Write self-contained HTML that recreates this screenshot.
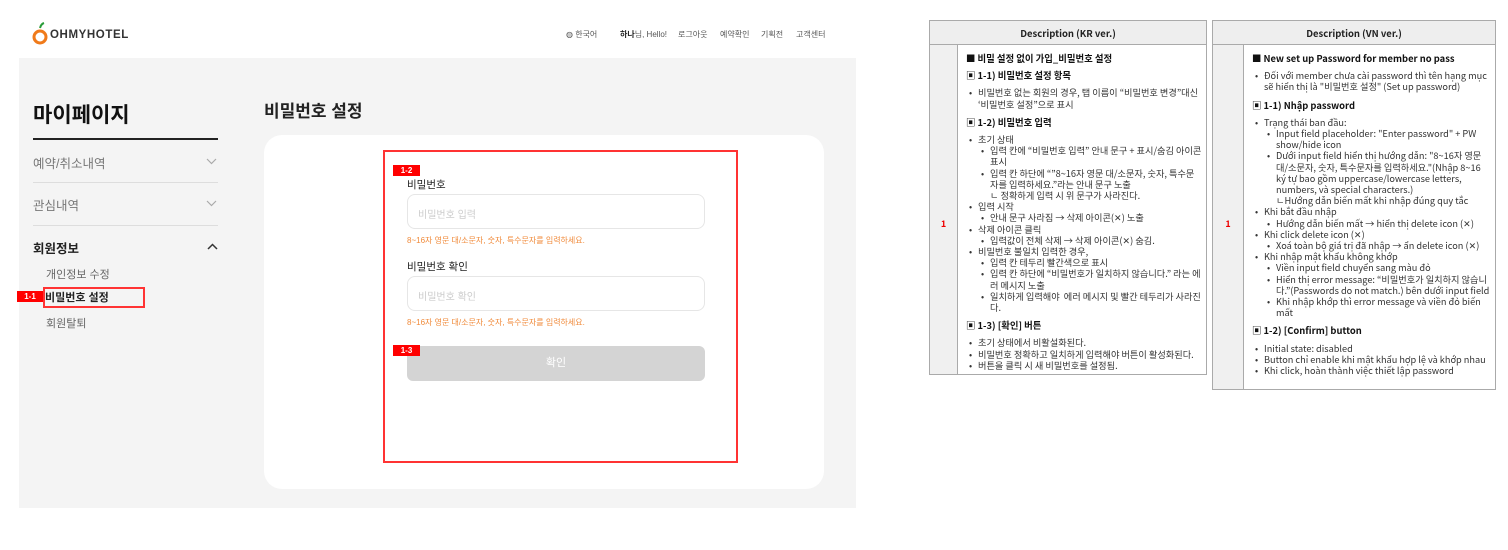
<!DOCTYPE html>
<html><head><meta charset="utf-8"><style>
*{margin:0;padding:0;box-sizing:border-box}
body{width:1508px;height:550px;background:#fff;position:relative;overflow:hidden;font-family:"Liberation Sans","Noto Sans CJK KR",sans-serif;color:#222}
.a{position:absolute;white-space:nowrap}
.tag{position:absolute;background:#f00;color:#fff;font-size:8px;font-weight:bold;text-align:center;line-height:11px}
.tbl{position:absolute;border:1px solid #aaa;background:#fff;font-family:"Noto Sans CJK KR",sans-serif}
.th{height:24px;background:#eee;border-bottom:1px solid #aaa;text-align:center;font-size:9.5px;font-weight:bold;line-height:24px}
.lc{position:absolute;left:0;top:24px;bottom:0;background:#f0f0f0;border-right:1px solid #aaa;color:#e00;font-size:9px;font-weight:bold;text-align:center}
.bd{position:absolute;top:24px;right:0;bottom:0;padding:7px 4px 0 8px;font-size:9.2px;line-height:11.2px;color:#333}
.bd h4{font-size:9.4px;font-weight:bold;color:#111;margin:1px 0 6px}
.bd ul{list-style:none;margin:0 0 7px}
.bd li{position:relative;padding-left:12px}
.bd li:before{content:"•";position:absolute;left:3px}
.bd ul ul{margin:0}
</style></head><body>
<svg class="a" style="left:32px;top:22px" width="16" height="24" viewBox="0 0 16 24"><path d="M8 6 Q9 2 12 1" stroke="#2a9d3a" stroke-width="2" fill="none"/><circle cx="8" cy="15" r="6" stroke="#f07a1a" stroke-width="3" fill="none"/></svg>
<div class="a" style="left:50px;top:29px;font-size:11.5px;font-weight:bold;letter-spacing:0.6px;color:#333">OHMYHOTEL</div>
<div class="a" style="left:566px;top:29px;font-size:8px;color:#555">◍ 한국어</div>
<div class="a" style="left:620px;top:29px;font-size:8px;color:#555"><b style="color:#222">하나</b>님, Hello!</div>
<div class="a" style="left:678px;top:29px;font-size:8px;color:#555">로그아웃</div>
<div class="a" style="left:720px;top:29px;font-size:8px;color:#555">예약확인</div>
<div class="a" style="left:761px;top:29px;font-size:8px;color:#555">기획전</div>
<div class="a" style="left:796px;top:29px;font-size:8px;color:#555">고객센터</div>
<div class="a" style="left:19px;top:58px;width:837px;height:450px;background:#f4f4f4"></div>
<div class="a" style="left:33px;top:99px;font-size:21px;font-weight:bold;color:#111">마이페이지</div>
<div class="a" style="left:33px;top:138px;width:185px;height:2px;background:#222"></div>
<div class="a" style="left:33px;top:153px;font-size:12.5px;color:#777">예약/취소내역</div>
<svg class="a" style="left:206px;top:158px" width="11" height="7" viewBox="0 0 11 7"><path d="M1 1 L5.5 5.5 L10 1" stroke="#aaa" stroke-width="1.2" fill="none"/></svg>
<div class="a" style="left:33px;top:182px;width:185px;height:1px;background:#ddd"></div>
<div class="a" style="left:33px;top:195px;font-size:12.5px;color:#777">관심내역</div>
<svg class="a" style="left:206px;top:200px" width="11" height="7" viewBox="0 0 11 7"><path d="M1 1 L5.5 5.5 L10 1" stroke="#aaa" stroke-width="1.2" fill="none"/></svg>
<div class="a" style="left:33px;top:225px;width:185px;height:1px;background:#ddd"></div>
<div class="a" style="left:33px;top:238px;font-size:12.5px;font-weight:bold;color:#222">회원정보</div>
<svg class="a" style="left:207px;top:243px" width="11" height="7" viewBox="0 0 11 7"><path d="M1 6 L5.5 1.5 L10 6" stroke="#333" stroke-width="1.5" fill="none"/></svg>
<div class="a" style="left:46px;top:266px;font-size:11px;color:#666">개인정보 수정</div>
<div class="a" style="left:45px;top:289px;font-size:11px;font-weight:bold;color:#222">비밀번호 설정</div>
<div class="a" style="left:46px;top:315px;font-size:11px;color:#666">회원탈퇴</div>
<div class="a" style="left:43px;top:287px;width:102px;height:21px;border:2px solid #f33"></div>
<div class="tag" style="left:17px;top:291px;width:26px">1-1</div>
<div class="a" style="left:264px;top:97px;font-size:17px;font-weight:bold;color:#222">비밀번호 설정</div>
<div class="a" style="left:264px;top:135px;width:560px;height:354px;background:#fff;border-radius:18px"></div>
<div class="a" style="left:383px;top:150px;width:355px;height:313px;border:2px solid #f33"></div>
<div class="tag" style="left:393px;top:165px;width:27px">1-2</div>
<div class="a" style="left:407px;top:177px;font-size:10.5px;color:#222">비밀번호</div>
<div class="a" style="left:407px;top:194px;width:298px;height:35px;border:1px solid #e6e6e6;border-radius:8px;background:#fff"></div>
<div class="a" style="left:418px;top:206px;font-size:10px;color:#ccc">비밀번호 입력</div>
<div class="a" style="left:407px;top:235px;font-size:8px;color:#f08a3a">8~16자 영문 대/소문자, 숫자, 특수문자를 입력하세요.</div>
<div class="a" style="left:407px;top:259px;font-size:10.5px;color:#222">비밀번호 확인</div>
<div class="a" style="left:407px;top:276px;width:298px;height:35px;border:1px solid #e6e6e6;border-radius:8px;background:#fff"></div>
<div class="a" style="left:418px;top:288px;font-size:10px;color:#ccc">비밀번호 확인</div>
<div class="a" style="left:407px;top:317px;font-size:8px;color:#f08a3a">8~16자 영문 대/소문자, 숫자, 특수문자를 입력하세요.</div>
<div class="a" style="left:407px;top:346px;width:298px;height:35px;background:#d4d4d4;border-radius:6px;color:#fff;font-size:11px;text-align:center;line-height:35px">확인</div>
<div class="tag" style="left:393px;top:345px;width:27px">1-3</div>

<div class="tbl" style="left:929px;top:20px;width:278px;height:355px">
<div class="th">Description (KR ver.)</div>
<div class="lc" style="width:28px;padding-top:172px">1</div>
<div class="bd" style="left:28px">
<h4>■ 비밀 설정 없이 가입_비밀번호 설정</h4>
<h4>▣ 1-1) 비밀번호 설정 항목</h4>
<ul><li>비밀번호 없는 회원의 경우, 탭 이름이 “비밀번호 변경”대신 ‘비밀번호 설정”으로 표시</li></ul>
<h4>▣ 1-2) 비밀번호 입력</h4>
<ul><li>초기 상태<ul><li>입력 칸에 “비밀번호 입력” 안내 문구 + 표시/숨김 아이콘 표시</li><li>입력 칸 하단에 “”8~16자 영문 대/소문자, 숫자, 특수문자를 입력하세요.”라는 안내 문구 노출<br>ㄴ 정확하게 입력 시 위 문구가 사라진다.</li></ul></li>
<li>입력 시작<ul><li>안내 문구 사라짐 → 삭제 아이콘(✕) 노출</li></ul></li>
<li>삭제 아이콘 클릭<ul><li>입력값이 전체 삭제 → 삭제 아이콘(✕) 숨김.</li></ul></li>
<li>비밀번호 불일치 입력한 경우,<ul><li>입력 칸 테두리 빨간색으로 표시</li><li>입력 칸 하단에 “비밀번호가 일치하지 않습니다.” 라는 에러 메시지 노출</li><li>일치하게 입력해야 &nbsp;에러 메시지 및 빨간 테두리가 사라진다.</li></ul></li></ul>
<h4>▣ 1-3) [확인] 버튼</h4>
<ul><li>초기 상태에서 비활설화된다.</li><li>비밀번호 정확하고 일치하게 입력해야 버튼이 활성화된다.</li><li>버튼을 클릭 시 새 비밀번호를 설정됨.</li></ul>
</div></div>

<div class="tbl" style="left:1212px;top:20px;width:284px;height:370px">
<div class="th">Description (VN ver.)</div>
<div class="lc" style="width:31px;padding-top:172px">1</div>
<div class="bd" style="left:31px">
<h4>■ New set up Password for member no pass</h4>
<ul><li>Đối với member chưa cài password thì tên hạng mục sẽ hiển thị là "비밀번호 설정" (Set up password)</li></ul>
<h4>▣ 1-1) Nhập password</h4>
<ul><li>Trạng thái ban đầu:<ul><li>Input field placeholder: "Enter password" + PW show/hide icon</li><li>Dưới input field hiển thị hướng dẫn: "8~16자 영문 대/소문자, 숫자, 특수문자를 입력하세요."(Nhập 8~16 ký tự bao gồm uppercase/lowercase letters, numbers, và special characters.)<br>ㄴHướng dẫn biến mất khi nhập đúng quy tắc</li></ul></li>
<li>Khi bắt đầu nhập<ul><li>Hướng dẫn biến mất → hiển thị delete icon (✕)</li></ul></li>
<li>Khi click delete icon (✕)<ul><li>Xoá toàn bộ giá trị đã nhập → ẩn delete icon (✕)</li></ul></li>
<li>Khi nhập mật khẩu không khớp<ul><li>Viền input field chuyển sang màu đỏ</li><li>Hiển thị error message: “비밀번호가 일치하지 않습니다.”(Passwords do not match.) bên dưới input field</li><li>Khi nhập khớp thì error message và viền đỏ biến mất</li></ul></li></ul>
<h4>▣ 1-2) [Confirm] button</h4>
<ul><li>Initial state: disabled</li><li>Button chỉ enable khi mật khẩu hợp lệ và khớp nhau</li><li>Khi click, hoàn thành việc thiết lập password</li></ul>
</div></div>
</body></html>
